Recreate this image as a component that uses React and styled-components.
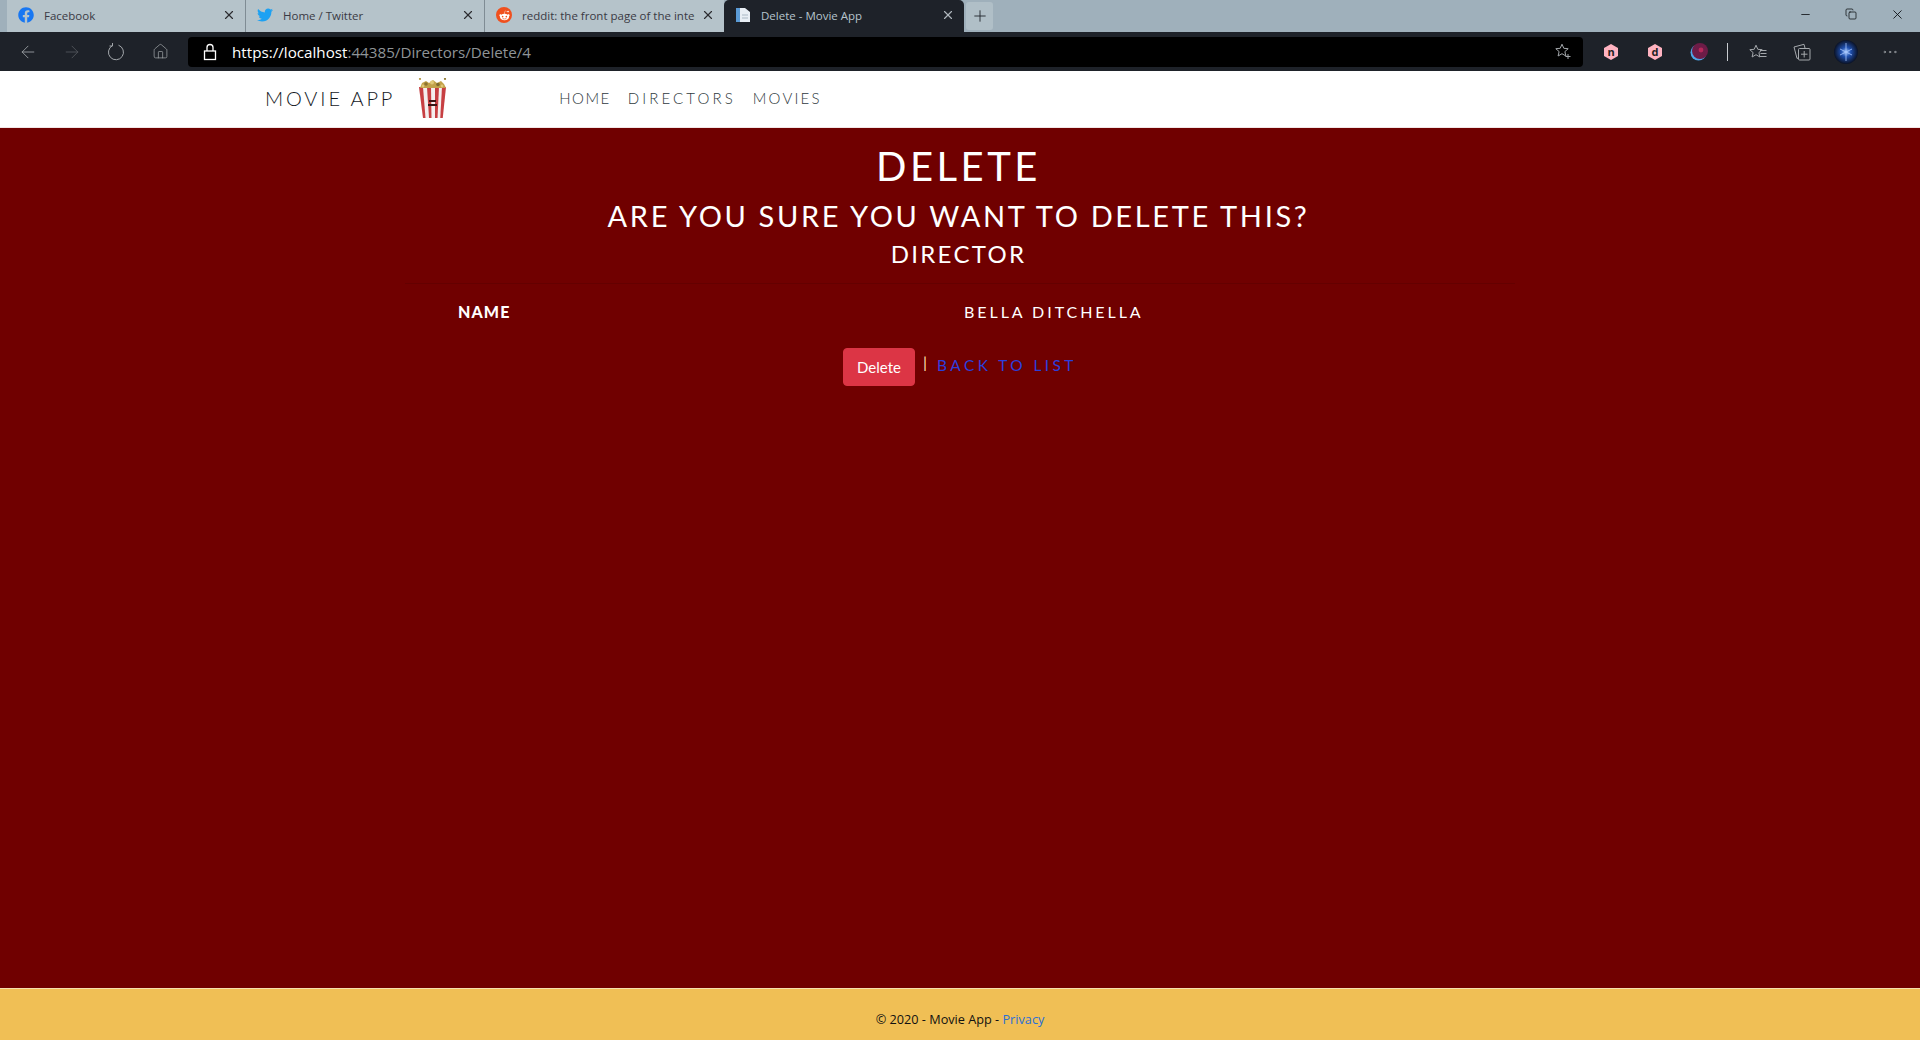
import React from 'react';
import styled, { createGlobalStyle } from 'styled-components';
import { FaFacebook, FaTwitter, FaRedditAlien } from 'react-icons/fa';
import { ArrowLeft, ArrowRight, Home, X, Plus, Minus, Copy, MoreHorizontal } from 'lucide-react';

const GlobalStyle = createGlobalStyle`
  html, body {
    margin: 0;
    padding: 0;
    height: 100%;
    background: #700000;
  }
  #root {
    height: 1040px;
  }
  * {
    box-sizing: border-box;
  }
`;

const HAND = `"Lato", "Open Sans", sans-serif`;
const UI = `"Open Sans", "Noto Sans", sans-serif`;

const Page = styled.div`
  display: flex;
  flex-direction: column;
  height: 1040px;
  overflow: hidden;
`;

const TabStrip = styled.div`
  display: flex;
  align-items: stretch;
  height: 32px;
  padding-left: 7px;
  background: #9fb0bb;
  font-family: ${UI};
  font-size: 11.5px;
`;

const Tab = styled.div`
  display: flex;
  align-items: center;
  width: ${p => p.$active ? 240 : 239}px;
  padding: 0 9px 2px 11px;
  background: ${p => p.$active ? '#1e2229' : '#b5c3ca'};
  color: ${p => p.$active ? '#b6c4cd' : '#3a3a44'};
  border-radius: ${p => p.$active ? '5px 5px 0 0' : '0'};
  border-right: ${p => p.$sep ? '1px solid #7f8c94' : 'none'};
  background-clip: padding-box;
`;

const TabIcon = styled.span`
  display: flex;
  align-items: center;
  justify-content: center;
  width: 16px;
  height: 16px;
  margin-right: 10px;
  flex: none;
`;

const RedditBadge = styled.span`
  display: flex;
  align-items: center;
  justify-content: center;
  width: 16px;
  height: 16px;
  border-radius: 50%;
  background: #f0501e;
  color: #fff;
`;

const TabTitle = styled.span`
  flex: 1;
  overflow: hidden;
  white-space: nowrap;
`;

const TabClose = styled(X)`
  flex: none;
  width: 14px;
  height: 14px;
  margin-left: 6px;
  color: ${p => p.$active ? '#aeb6bc' : '#2c2c30'};
`;

const NewTab = styled.div`
  display: flex;
  align-items: center;
  justify-content: center;
  width: 27px;
  height: 28px;
  margin: 2px 0 0 2px;
  border-radius: 3px;
  background: #b0bfc7;
  color: #20242a;
`;

const WindowButtons = styled.div`
  display: flex;
  margin-left: auto;
  color: #0c0f12;
`;

const WindowButton = styled.div`
  display: flex;
  align-items: center;
  justify-content: center;
  width: 46px;
  height: 28px;
`;

const Toolbar = styled.div`
  display: flex;
  align-items: center;
  height: 39px;
  padding: 0 6px 0 6px;
  background: #1e2229;
  color: #a4a8ac;
`;

const ToolButton = styled.div`
  display: flex;
  align-items: center;
  justify-content: center;
  flex: none;
  width: 44px;
  height: 30px;
  color: ${p => p.$dim ? '#55595e' : '#a4a8ac'};
`;

const AddressBar = styled.div`
  display: flex;
  align-items: center;
  flex: none;
  width: 1395px;
  height: 30px;
  margin: 0 6px;
  padding: 0 11px 0 15px;
  border-radius: 4px;
  background: #000;
  font-family: ${UI};
  font-size: 15.2px;
`;

const LockSlot = styled.span`
  display: flex;
  flex: none;
  margin-right: 15px;
`;

const UrlStrong = styled.span`
  color: #fff;
`;

const UrlRest = styled.span`
  color: #8f9497;
`;

const StarSlot = styled.span`
  display: flex;
  margin-left: auto;
`;

const ToolDivider = styled.div`
  flex: none;
  width: 1px;
  height: 18px;
  margin: 0 8px 0 6px;
  background: #c8ccd0;
`;

const Navbar = styled.nav`
  display: flex;
  align-items: center;
  flex: none;
  height: 57px;
  padding: 0 0 2px 265px;
  background: #fff;
  border-bottom: 1px solid #f2e6e6;
  font-family: ${HAND};
`;

const Brand = styled.a`
  font-size: 20px;
  font-weight: 300;
  letter-spacing: 2.85px;
  color: #14181e;
  text-transform: uppercase;
  white-space: nowrap;
`;

const Logo = styled.svg`
  flex: none;
  width: 31px;
  height: 40px;
  margin: 0 111px 0 22px;
`;

const NavLink = styled.a`
  margin-right: 17px;
  font-size: 15px;
  font-weight: 300;
  letter-spacing: ${p => p.$track}px;
  color: #2f3a40;
  text-transform: uppercase;
  white-space: nowrap;
`;

const Main = styled.main`
  flex: 1;
  padding-top: 14px;
  background: #700000;
  color: #fff;
  font-family: ${HAND};
  text-transform: uppercase;
`;

const Container = styled.div`
  width: 1110px;
  margin: 0 auto;
`;

const Heading = styled.div`
  margin: 0 0 ${p => p.$gap}px;
  padding-right: 3px;
  font-size: ${p => p.$size}px;
  line-height: ${p => p.$line}px;
  font-weight: 400;
  letter-spacing: ${p => p.$track}px;
  text-align: center;
  white-space: nowrap;
`;

const Rule = styled.hr`
  margin: 15px 0 16px;
  border: 0;
  border-top: 1px solid rgba(0, 0, 0, 0.1);
`;

const Details = styled.dl`
  display: grid;
  grid-template-columns: 559px 1fr;
  margin: 0 0 24px;
  font-size: 16px;
  line-height: 24px;
`;

const Term = styled.dt`
  padding-left: 53px;
  font-weight: 900;
  letter-spacing: 1.1px;
`;

const Value = styled.dd`
  margin: 0;
  letter-spacing: 2.95px;
`;

const Actions = styled.div`
  display: flex;
  align-items: flex-start;
  padding-left: 438px;
`;

const DeleteButton = styled.button`
  width: 72px;
  height: 38px;
  padding: 0;
  border: 1px solid #dc3545;
  border-radius: 4px;
  background: #dc3545;
  color: #fff;
  font-family: ${HAND};
  font-size: 15px;
  text-transform: none;
`;

const Pipe = styled.span`
  margin: 2px 10px 0 8px;
  color: #ffe0b0;
  font-size: 16px;
  line-height: 24px;
`;

const BackLink = styled.a`
  margin-top: 5px;
  color: #2b3fdc;
  font-size: 15.5px;
  line-height: 24px;
  font-weight: 400;
  letter-spacing: 3.4px;
  white-space: nowrap;
`;

const Footer = styled.footer`
  flex: none;
  height: 52px;
  padding-top: 20px;
  border-top: 1px solid #f6dfae;
  background: #f0bf55;
  color: #111;
  font-family: ${UI};
  font-size: 12.7px;
  line-height: 20px;
  text-align: center;
`;

const FooterLink = styled.a`
  color: #2a6fd6;
`;

const stripes = [2, 10, 18, 25];

const Popcorn = () => (
  <Logo viewBox="0 0 31 40">
    <path d="M2 9 L6 40 H25 L29 9 Z" fill="#f4eeee" />
    {stripes.map(x => (
      <path key={x} d={`M${x} 9 H${x + 4} L${x * 0.75 + 7} 40 H${x * 0.75 + 4.5} Z`} fill="#c73f42" />
    ))}
    <path d="M3 10 L5 5 L9 3 L12 5 L16 2 L20 5 L24 3 L27 6 L29 10 Z" fill="#c2a24a" />
    <circle cx="9" cy="6" r="1.8" fill="#8c7430" />
    <circle cx="15" cy="4.5" r="2" fill="#e0c877" />
    <circle cx="21" cy="6.5" r="1.8" fill="#7e6a2e" />
    <circle cx="25" cy="8" r="1.4" fill="#e0c877" />
    <circle cx="6" cy="8" r="1.4" fill="#e0c877" />
    <circle cx="3" cy="1" r="1.1" fill="#b59a4a" />
    <circle cx="28" cy="1" r="1.1" fill="#8f7a32" />
    <rect x="12" y="22" width="7" height="2" fill="#3a1414" />
    <rect x="11" y="26" width="9" height="2" fill="#3a1414" />
  </Logo>
);

const HexBadge = ({ letter }) => (
  <svg width="16" height="18" viewBox="0 0 16 18">
    <path d="M8 1 L15 5 V13 L8 17 L1 13 V5 Z" fill="#ffb3c1" />
    <text x="8" y="13" textAnchor="middle" fontFamily="Open Sans, sans-serif" fontSize="11" fontWeight="700" fill="#222">{letter}</text>
  </svg>
);

const MoonIcon = () => (
  <svg width="18" height="18" viewBox="0 0 18 18">
    <circle cx="8.5" cy="9.5" r="8" fill="#4ea5e8" />
    <circle cx="10" cy="8" r="8" fill="#6d1c47" />
    <circle cx="11" cy="7" r="2.4" fill="#b52859" />
  </svg>
);

const AvatarIcon = () => (
  <svg width="24" height="24" viewBox="0 0 24 24">
    <defs>
      <radialGradient id="avatarGlow">
        <stop offset="0" stopColor="#a9ccff" />
        <stop offset="0.4" stopColor="#1f4fae" />
        <stop offset="1" stopColor="#0a1226" />
      </radialGradient>
    </defs>
    <circle cx="12" cy="12" r="12" fill="url(#avatarGlow)" />
    <path d="M12 3 V21 M6 9 L18 15 M18 9 L6 15" stroke="#a9c8ff" strokeWidth="0.8" />
  </svg>
);

const LockGlyph = () => (
  <svg width="14" height="18" viewBox="0 0 14 18" fill="none" stroke="#fff" strokeWidth="1.3">
    <rect x="1.5" y="8" width="11" height="8.5" />
    <path d="M4 8 V4.5 a3 3 0 0 1 6 0 V8" />
  </svg>
);

const RefreshGlyph = () => (
  <svg width="18" height="18" viewBox="0 0 18 18" fill="none" stroke="currentColor" strokeWidth="1">
    <path d="M11.5 2.2 A7.5 7.5 0 1 1 5.5 2.6" />
    <path d="M5.5 0 V3 H2.5" />
  </svg>
);

const StarPath = 'M7 1.2 L8.8 5.3 L13.2 5.7 L9.9 8.6 L10.9 13 L7 10.7 L3.1 13 L4.1 8.6 L0.8 5.7 L5.2 5.3 Z';

const StarPlusGlyph = () => (
  <svg width="17" height="17" viewBox="0 0 17 17" fill="none" stroke="currentColor" strokeWidth="1">
    <path d={StarPath} />
    <path d="M13 11 V16 M10.5 13.5 H15.5" />
  </svg>
);

const FavoritesGlyph = () => (
  <svg width="18" height="16" viewBox="0 0 18 16" fill="none" stroke="currentColor" strokeWidth="1">
    <path d={StarPath} />
    <path d="M11 6.5 H17.5 M11.5 9.5 H17.5 M11 12.5 H17.5" />
  </svg>
);

const CollectionsGlyph = () => (
  <svg width="18" height="18" viewBox="0 0 18 18" fill="none" stroke="currentColor" strokeWidth="1">
    <path d="M5.5 15 L4 15.4 L1 4 L11 1.3 L12 5" />
    <rect x="5.5" y="5.5" width="11.5" height="11.5" rx="1" />
    <path d="M11.2 8 V14.5 M8 11.2 H14.5" />
  </svg>
);

const tabs = [
  { title: 'Facebook', icon: <FaFacebook size={16} color="#1877f2" />, sep: true },
  { title: 'Home / Twitter', icon: <FaTwitter size={16} color="#1da1f2" />, sep: true },
  { title: 'reddit: the front page of the internet', icon: <RedditBadge><FaRedditAlien size={11} /></RedditBadge> },
];

const App = () => (
  <Page>
    <GlobalStyle />
    <TabStrip>
      {tabs.map(tab => (
        <Tab key={tab.title} $sep={tab.sep}>
          <TabIcon>{tab.icon}</TabIcon>
          <TabTitle>{tab.title}</TabTitle>
          <TabClose />
        </Tab>
      ))}
      <Tab $active>
        <TabIcon>
          <svg width="16" height="16" viewBox="0 0 16 16">
            <path d="M1 1 H10 L15 5 V15 H1 Z" fill="#e8eef4" />
            <path d="M1 1 H5 V15 H1 Z" fill="#5b9bd5" />
            <path d="M7 8 H13 M7 11 H13" stroke="#aab8c4" />
          </svg>
        </TabIcon>
        <TabTitle>Delete - Movie App</TabTitle>
        <TabClose $active />
      </Tab>
      <NewTab><Plus size={18} strokeWidth={1.2} /></NewTab>
      <WindowButtons>
        <WindowButton><Minus size={13} strokeWidth={1.5} /></WindowButton>
        <WindowButton><Copy size={12} strokeWidth={1.5} /></WindowButton>
        <WindowButton><X size={15} strokeWidth={1.4} /></WindowButton>
      </WindowButtons>
    </TabStrip>
    <Toolbar>
      <ToolButton><ArrowLeft size={20} strokeWidth={1} /></ToolButton>
      <ToolButton $dim><ArrowRight size={20} strokeWidth={1} /></ToolButton>
      <ToolButton><RefreshGlyph /></ToolButton>
      <ToolButton><Home size={17} strokeWidth={1} /></ToolButton>
      <AddressBar>
        <LockSlot><LockGlyph /></LockSlot>
        <UrlStrong>https://localhost</UrlStrong>
        <UrlRest>:44385/Directors/Delete/4</UrlRest>
        <StarSlot><StarPlusGlyph /></StarSlot>
      </AddressBar>
      <ToolButton><HexBadge letter="n" /></ToolButton>
      <ToolButton><HexBadge letter="d" /></ToolButton>
      <ToolButton><MoonIcon /></ToolButton>
      <ToolDivider />
      <ToolButton><FavoritesGlyph /></ToolButton>
      <ToolButton><CollectionsGlyph /></ToolButton>
      <ToolButton><AvatarIcon /></ToolButton>
      <ToolButton><MoreHorizontal size={18} strokeWidth={1} /></ToolButton>
    </Toolbar>
    <Navbar>
      <Brand>Movie App</Brand>
      <Popcorn />
      <NavLink $track={1.5}>Home</NavLink>
      <NavLink $track={3.1}>Directors</NavLink>
      <NavLink $track={2.2}>Movies</NavLink>
    </Navbar>
    <Main>
      <Container>
        <Heading $size={40} $line={48} $gap={7} $track={3.5}>Delete</Heading>
        <Heading $size={29} $line={38} $gap={4} $track={2.65}>Are you sure you want to delete this?</Heading>
        <Heading $size={24} $line={29} $gap={0} $track={2.3}>Director</Heading>
        <Rule />
        <Details>
          <Term>Name</Term>
          <Value>Bella Ditchella</Value>
        </Details>
        <Actions>
          <DeleteButton>Delete</DeleteButton>
          <Pipe>|</Pipe>
          <BackLink>Back to List</BackLink>
        </Actions>
      </Container>
    </Main>
    <Footer>
      © 2020 - Movie App - <FooterLink>Privacy</FooterLink>
    </Footer>
  </Page>
);

export default App;
